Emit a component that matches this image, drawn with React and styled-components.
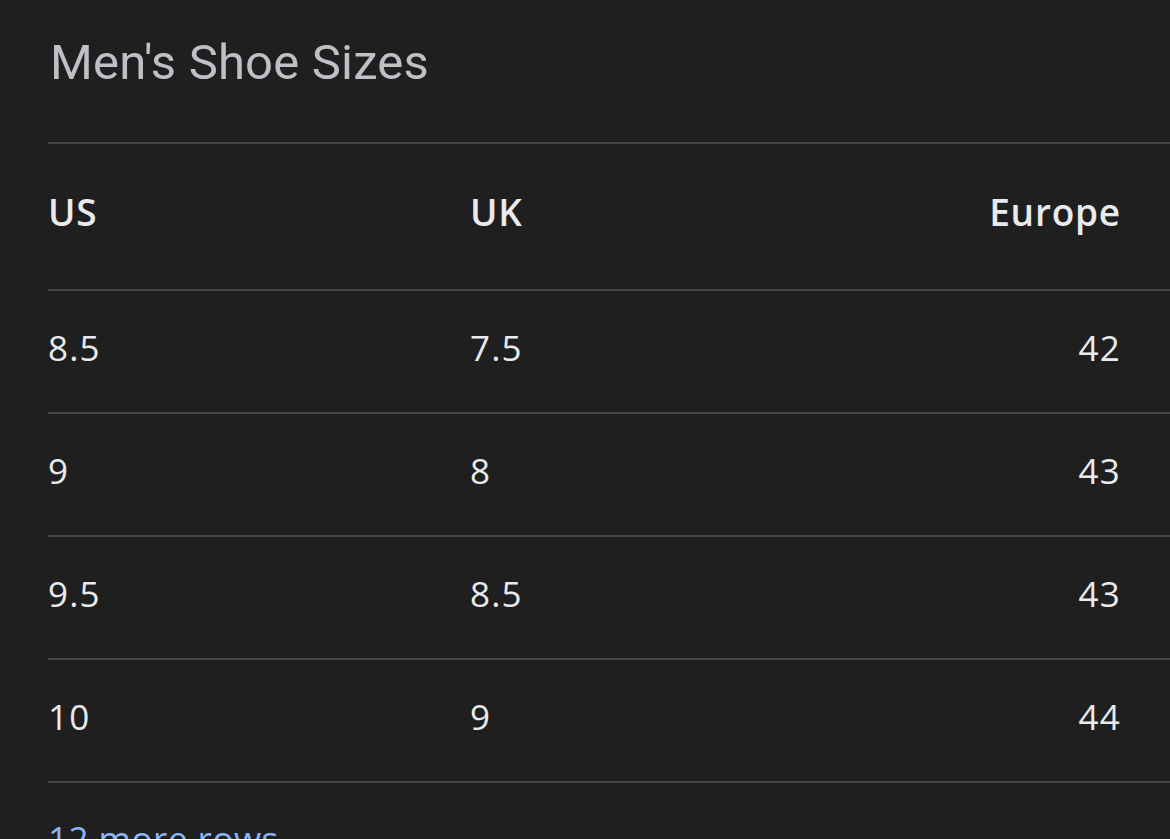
import React from "react";
import styled, { createGlobalStyle } from "styled-components";

const GlobalStyle = createGlobalStyle`
  html, body {
    margin: 0;
    padding: 0;
    background: #1f1f1f;
    overflow: hidden;
  }
  body {
    font-family: "Open Sans", Roboto, "Liberation Sans", sans-serif;
  }
`;

const rows = [
  { us: "8.5", uk: "7.5", eu: "42" },
  { us: "9", uk: "8", eu: "43" },
  { us: "9.5", uk: "8.5", eu: "43" },
  { us: "10", uk: "9", eu: "44" },
];

const Page = styled.div`
  width: 1170px;
  height: 839px;
  background: #1f1f1f;
  padding-left: 48px;
  box-sizing: border-box;
  overflow: hidden;
`;

const Title = styled.h1`
  margin: 0;
  padding: 34px 0 0 2px;
  height: 142px;
  box-sizing: border-box;
  font-family: Roboto, "Open Sans", sans-serif;
  font-size: 49px;
  font-weight: 400;
  color: #bdc1c6;
  letter-spacing: 0.2px;
`;

const Table = styled.div`
  border-top: 2px solid #444548;
`;

const Row = styled.div`
  display: grid;
  grid-template-columns: 422px 1fr auto;
  align-items: center;
  height: ${(p) => (p.$head ? "145px" : "121px")};
  padding-right: 50px;
  border-bottom: 2px solid #444548;
  color: #e8eaed;
  font-size: ${(p) => (p.$head ? "37px" : "35px")};
  font-weight: ${(p) => (p.$head ? 600 : 400)};
  letter-spacing: ${(p) => (p.$head ? "0.8px" : "1.2px")};
`;

const Cell = styled.div`
  text-align: ${(p) => (p.$right ? "right" : "left")};
  padding-bottom: ${(p) => (p.$head ? "10px" : "8px")};
  margin-right: ${(p) => (p.$right ? "-1px" : "0")};
`;

const MoreLink = styled.a`
  display: block;
  padding-top: 32px;
  font-size: 35px;
  color: #8ab4f8;
  text-decoration: none;
  letter-spacing: 0.5px;
`;

export default function App() {
  return (
    <>
      <GlobalStyle />
      <Page>
        <Title>Men's Shoe Sizes</Title>
        <Table>
          <Row $head>
            <Cell $head>US</Cell>
            <Cell $head>UK</Cell>
            <Cell $head $right>Europe</Cell>
          </Row>
          {rows.map((r, i) => (
            <Row key={i}>
              <Cell>{r.us}</Cell>
              <Cell>{r.uk}</Cell>
              <Cell $right>{r.eu}</Cell>
            </Row>
          ))}
        </Table>
        <MoreLink href="#">12 more rows</MoreLink>
      </Page>
    </>
  );
}
